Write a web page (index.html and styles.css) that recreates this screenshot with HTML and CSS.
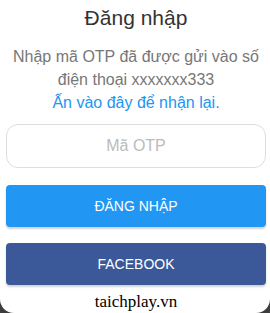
FILE: index.html
```html
<!DOCTYPE html>
<html lang="vi">
<head>
<meta charset="utf-8">
<link rel="stylesheet" href="styles.css">
</head>
<body>
<div class="card">
  <h1 class="title">Đăng nhập</h1>
  <p class="msg">Nhập mã OTP đã được gửi vào số<br>điện thoại xxxxxxx333<br><a class="resend" href="#">Ấn vào đây để nhận lại.</a></p>
  <input class="otp" type="text" placeholder="Mã OTP">
  <button class="btn btn-login">ĐĂNG NHẬP</button>
  <button class="btn btn-fb">FACEBOOK</button>
  <div class="brand">taichplay.vn</div>
</div>
</body>
</html>
```
FILE: styles.css
```css
html, body {
  margin: 0;
  padding: 0;
  background: #3d3d3d;
}
body {
  width: 270px;
  height: 313px;
  overflow: hidden;
}
.card {
  box-sizing: border-box;
  width: 270px;
  height: 313px;
  background: #fff;
  border-radius: 0 0 14px 14px;
  padding: 0 4px 0 6px;
  display: flex;
  flex-direction: column;
  font-family: "Liberation Sans", Arial, sans-serif;
}
.title {
  margin: 6px 0 0;
  font-size: 21px;
  line-height: 24px;
  font-weight: normal;
  color: #333;
  text-align: center;
}
.msg {
  margin: 15px 0 0;
  font-size: 16px;
  line-height: 23px;
  color: #777;
  text-align: center;
}
.resend {
  color: #2196f3;
  text-decoration: none;
}
.otp {
  box-sizing: border-box;
  margin-top: 10px;
  width: 100%;
  height: 44px;
  border: 1px solid #ddd;
  border-radius: 12px;
  font-family: inherit;
  font-size: 16px;
  text-align: center;
  color: #333;
  outline: none;
}
.otp::placeholder {
  color: #bbb;
}
.btn {
  width: 100%;
  height: 42px;
  border: none;
  border-radius: 4px;
  color: #fff;
  font-family: inherit;
  font-size: 14px;
  box-shadow: 0 2px 2px rgba(0,0,0,0.18);
}
.btn-login {
  margin-top: 17px;
  background: #2196f3;
}
.btn-fb {
  margin-top: 16px;
  background: #3b5998;
}
.brand {
  margin-top: 7px;
  text-align: center;
  font-family: "Liberation Serif", "Times New Roman", serif;
  font-size: 17px;
  line-height: 20px;
  color: #000;
}
```
